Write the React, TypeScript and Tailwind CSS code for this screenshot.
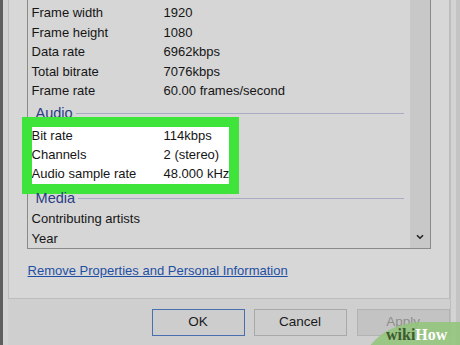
import React from "react";

type Row = { label: string; value: string };

const videoRows: Row[] = [
  { label: "Frame width", value: "1920" },
  { label: "Frame height", value: "1080" },
  { label: "Data rate", value: "6962kbps" },
  { label: "Total bitrate", value: "7076kbps" },
  { label: "Frame rate", value: "60.00 frames/second" },
];

const audioRows: Row[] = [
  { label: "Bit rate", value: "114kbps" },
  { label: "Channels", value: "2 (stereo)" },
  { label: "Audio sample rate", value: "48.000 kHz" },
];

const mediaRows: Row[] = [
  { label: "Contributing artists", value: "" },
  { label: "Year", value: "" },
];

function PropRow({ row, h = "h-[19.5px]" }: { row: Row; h?: string }) {
  return (
    <div className={`flex items-center ${h} whitespace-nowrap`}>
      <span className="w-[132px] shrink-0">{row.label}</span>
      <span>{row.value}</span>
    </div>
  );
}

function GroupHeader({ title, className }: { title: string; className: string }) {
  return (
    <div className={`flex items-center pl-[8px] pr-[6px] gap-[3px] ${className}`}>
      <span className="text-[14.5px] text-[#2a3d85] leading-none">{title}</span>
      <div className="flex-1 h-px bg-[#a9abc2]" />
    </div>
  );
}

export default function App() {
  return (
    <div
      className="relative w-[460px] h-[345px] overflow-hidden flex bg-[#cfcfcf] text-[13px] text-[#151515]"
      style={{ fontFamily: '"Liberation Sans", Arial, sans-serif' }}
    >
      {/* window frame */}
      <div className="w-[3px] bg-[#5f5f5f]" />
      <div className="w-[5px] bg-[#d4d4d4]" />

      <div className="flex-1 flex flex-col">
        {/* tab panel */}
        <div className="h-[299px] border-x border-b border-[#bdbdbd] bg-[#d7d7d7] px-[18px] flex flex-col">
          <div className="h-[249px] border-x border-b border-[#8a8a8a] bg-[#d6d6d6] flex">
            <div className="flex-1 flex flex-col pt-[3px]">
              <div className="pl-[4px]">
                {videoRows.map((r) => (
                  <PropRow key={r.label} row={r} />
                ))}
              </div>

              <GroupHeader title="Audio" className="h-[26.5px]" />

              <div className="ml-[4px] w-[197px] bg-white outline-[10px] outline-solid outline-[#3fe43a]">
                {audioRows.map((r) => (
                  <PropRow key={r.label} row={r} h="h-[19px]" />
                ))}
              </div>

              <GroupHeader title="Media" className="h-[25.5px] pt-[4px]" />

              <div className="pl-[4px]">
                {mediaRows.map((r) => (
                  <PropRow key={r.label} row={r} />
                ))}
              </div>
            </div>

            {/* scrollbar */}
            <div className="w-[20px] bg-[#c8c8c8] flex items-end justify-center pb-[8px]">
              <svg width="8" height="6" viewBox="0 0 8 6">
                <path d="M1 1.2 L4 4.2 L7 1.2" fill="none" stroke="#222" strokeWidth="1.6" />
              </svg>
            </div>
          </div>

          <a className="mt-[14px] ml-[1px] text-[13px] text-[#1f4fa3] underline leading-[15px] w-fit">
            Remove Properties and Personal Information
          </a>
        </div>

        {/* buttons */}
        <div className="flex pl-[144px] pt-[10px] gap-[9px] text-[13.5px]">
          <button className="w-[93px] h-[27px] bg-[#cdcdcd] border border-[#4a6fae] text-[#1a1a1a]">
            OK
          </button>
          <button className="w-[93px] h-[27px] bg-[#cdcdcd] border border-[#a9a9a9] text-[#1a1a1a]">
            Cancel
          </button>
          <button className="ml-[1px] w-[93px] h-[27px] bg-[#c3c3c3] border border-[#b3b3b3] text-[#8e8e8e]">
            Apply
          </button>
        </div>
      </div>

      <div className="w-[11px] flex border-l border-[#bdbdbd]">
        <div className="w-[5px] bg-[#d3d3d3]" />
        <div className="flex-1 bg-[#c4c4c4]" />
      </div>

      {/* watermark */}
      <div className="absolute left-[363px] top-[322px] w-[110px] h-[60px] bg-[#93c47d] rounded-tl-[60px_45px] opacity-90" />
      <div
        className="absolute left-[386px] top-[327px] text-[16px] font-bold leading-none"
        style={{ fontFamily: '"Liberation Serif", "Times New Roman", serif' }}
      >
        <span className="text-[#3d5a2e]">wiki</span>
        <span className="text-white">How</span>
      </div>
    </div>
  );
}
